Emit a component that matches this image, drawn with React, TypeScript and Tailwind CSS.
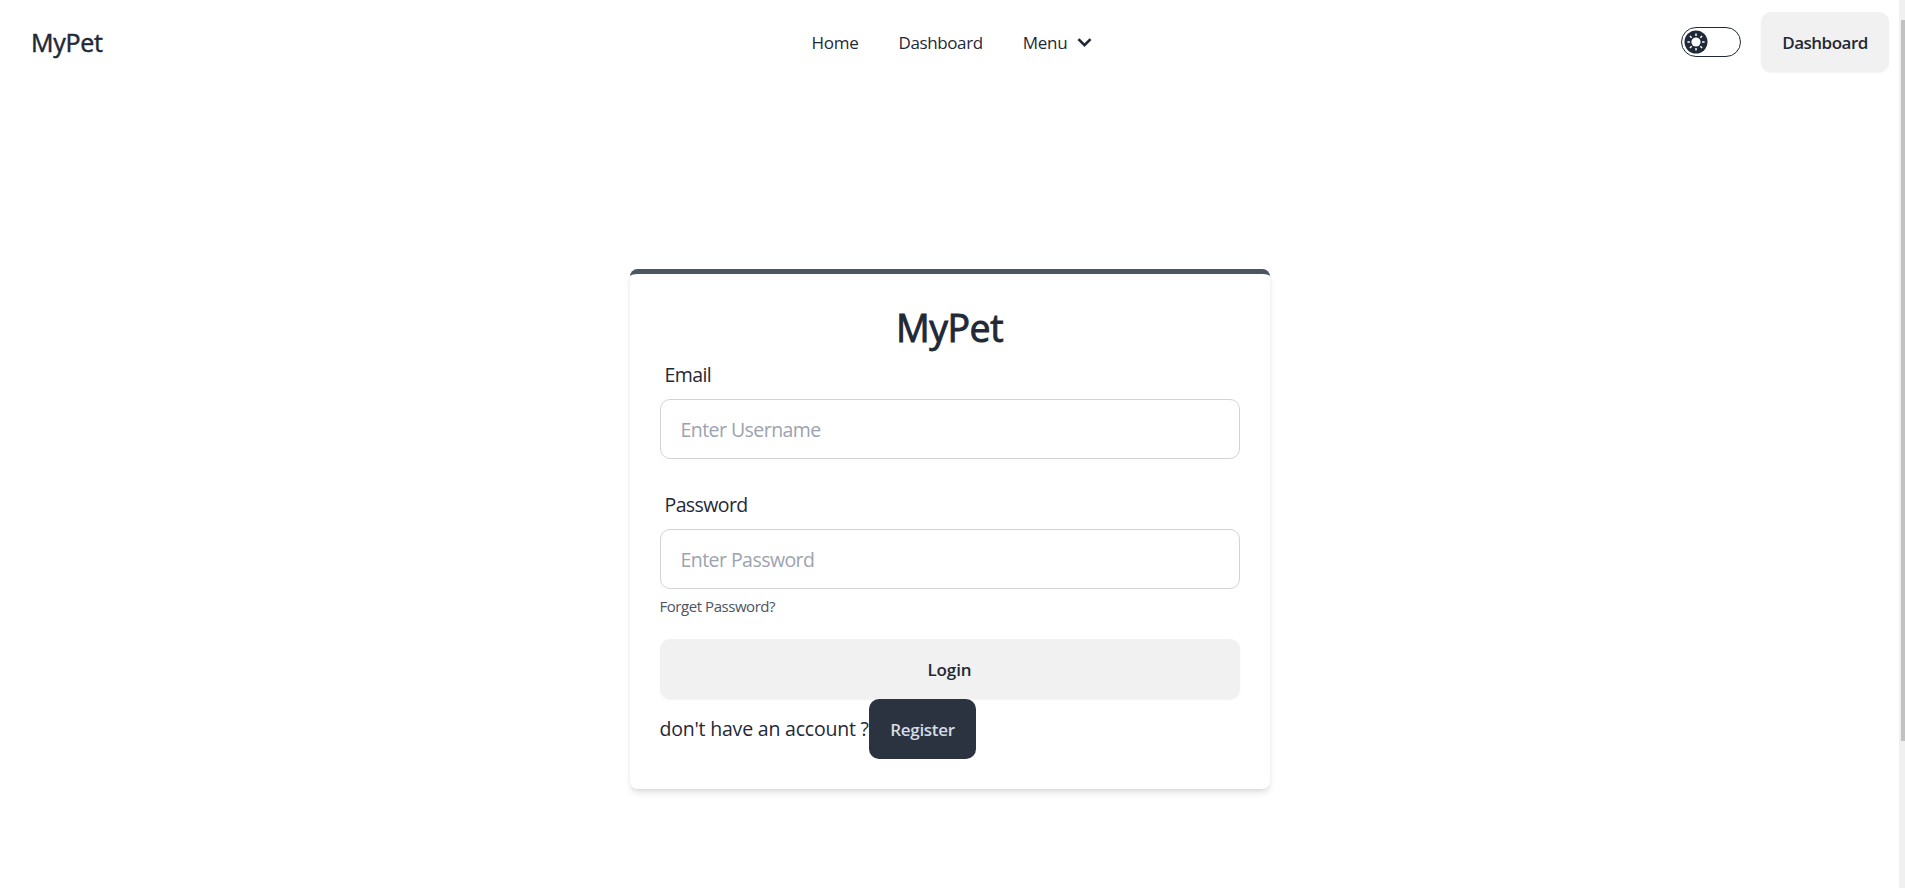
import React from "react";

function SunIcon() {
  const angles = [0, 45, 90, 135, 180, 225, 270, 315];
  return (
    <svg viewBox="0 0 24 24" className="size-6" aria-hidden="true">
      <circle cx="12" cy="12" r="11.5" fill="#1f2937" />
      <circle cx="12" cy="12" r="4.6" fill="#fff" />
      {angles.map((a) => (
        <line key={a} x1="12" y1="3.4" x2="12" y2="5.9" stroke="#fff" strokeWidth="1.5" transform={`rotate(${a} 12 12)`} />
      ))}
    </svg>
  );
}

function Navbar() {
  return (
    <header className="flex h-[84px] items-center pr-[10px] pl-[31px]">
      <div className="w-[780.5px] text-[25px] leading-[30px] tracking-[-0.3px] [-webkit-text-stroke:0.5px_#1f2937]">MyPet</div>
      <nav className="flex w-[869.5px] items-center gap-[40px] text-[17px] leading-[25px] tracking-[-0.25px]">
        <a>Home</a>
        <a className="tracking-[-0.4px]">Dashboard</a>
        <a className="flex items-center gap-[5px]">
          Menu
          <svg className="size-[25px]" viewBox="0 0 24 24" fill="none" stroke="currentColor" strokeWidth="2.6" aria-hidden="true">
            <path d="M6.2 8.8L12 14.6L17.8 8.8" />
          </svg>
        </a>
      </nav>
      <div className="flex items-center gap-5">
        <div className="flex h-[30px] w-[60px] items-center rounded-full border border-[#1f2937] pl-[2px]">
          <SunIcon />
        </div>
        <button className="h-[60px] w-32 rounded-[10px] bg-[#f1f1f1] pt-[2px] text-[17px] font-semibold tracking-[-0.5px] shadow-[0_1px_2px_rgba(0,0,0,0.05)]">
          Dashboard
        </button>
      </div>
    </header>
  );
}

function Field({ label, placeholder, type }: { label: string; placeholder: string; type: string }) {
  return (
    <label className="block">
      <span className="block h-[45px] px-[5px] pt-[6px] text-[19.5px] leading-[30px] tracking-[-0.6px]">{label}</span>
      <input
        type={type}
        placeholder={placeholder}
        className="block h-[60px] w-full rounded-[10px] border border-[#d2d3d5] bg-white px-5 pt-px text-[19.5px] tracking-[-0.55px] outline-none placeholder:text-[#9ca3af]"
      />
    </label>
  );
}

export default function App() {
  return (
    <div className="flex h-[888px] w-full overflow-hidden bg-white font-['Open_Sans','Noto_Sans',sans-serif] text-[#1f2937]">
      <div className="flex min-w-0 flex-1 flex-col">
        <Navbar />
        <main className="flex justify-center pt-[185px]">
          <section className="h-[520px] w-[640px] rounded-[7.5px] border-t-[5px] border-[#4b5563] bg-white px-[30px] pt-[30px] shadow-[0_5px_7px_-1px_rgba(0,0,0,0.1),0_2px_5px_-2px_rgba(0,0,0,0.1)]">
            <h1 className="h-[50px] text-center text-[37.5px] leading-[48px] tracking-[-0.5px] [-webkit-text-stroke:0.9px_#1f2937]">MyPet</h1>
            <Field label="Email" placeholder="Enter Username" type="text" />
            <div className="h-[25px]" />
            <Field label="Password" placeholder="Enter Password" type="password" />
            <a className="block h-[50px] pt-[5px] text-[15px] leading-[25px] tracking-[-0.45px] text-[#4b5563]">Forget Password?</a>
            <button className="block h-[60px] w-full rounded-[10px] bg-[#f1f1f1] pt-[2px] text-[17px] font-semibold tracking-[-0.1px] shadow-[0_1px_2px_rgba(0,0,0,0.05)]">
              Login
            </button>
            <p className="flex items-center text-[19.5px] tracking-[-0.2px]">
              <span className="w-[209px] whitespace-nowrap">don't have an account ?</span>
              <button className="h-[60px] w-[107px] rounded-[10px] bg-[#2c3340] pt-[2px] pl-px text-[17px] font-semibold tracking-[-0.3px] text-[#d5dbe5]">
                Register
              </button>
            </p>
          </section>
        </main>
      </div>
      <div className="flex w-[6px] flex-col items-end bg-[#f0f0f0] pt-5">
        <div className="h-[721px] w-1 bg-[#c1c1c1]" />
      </div>
    </div>
  );
}
